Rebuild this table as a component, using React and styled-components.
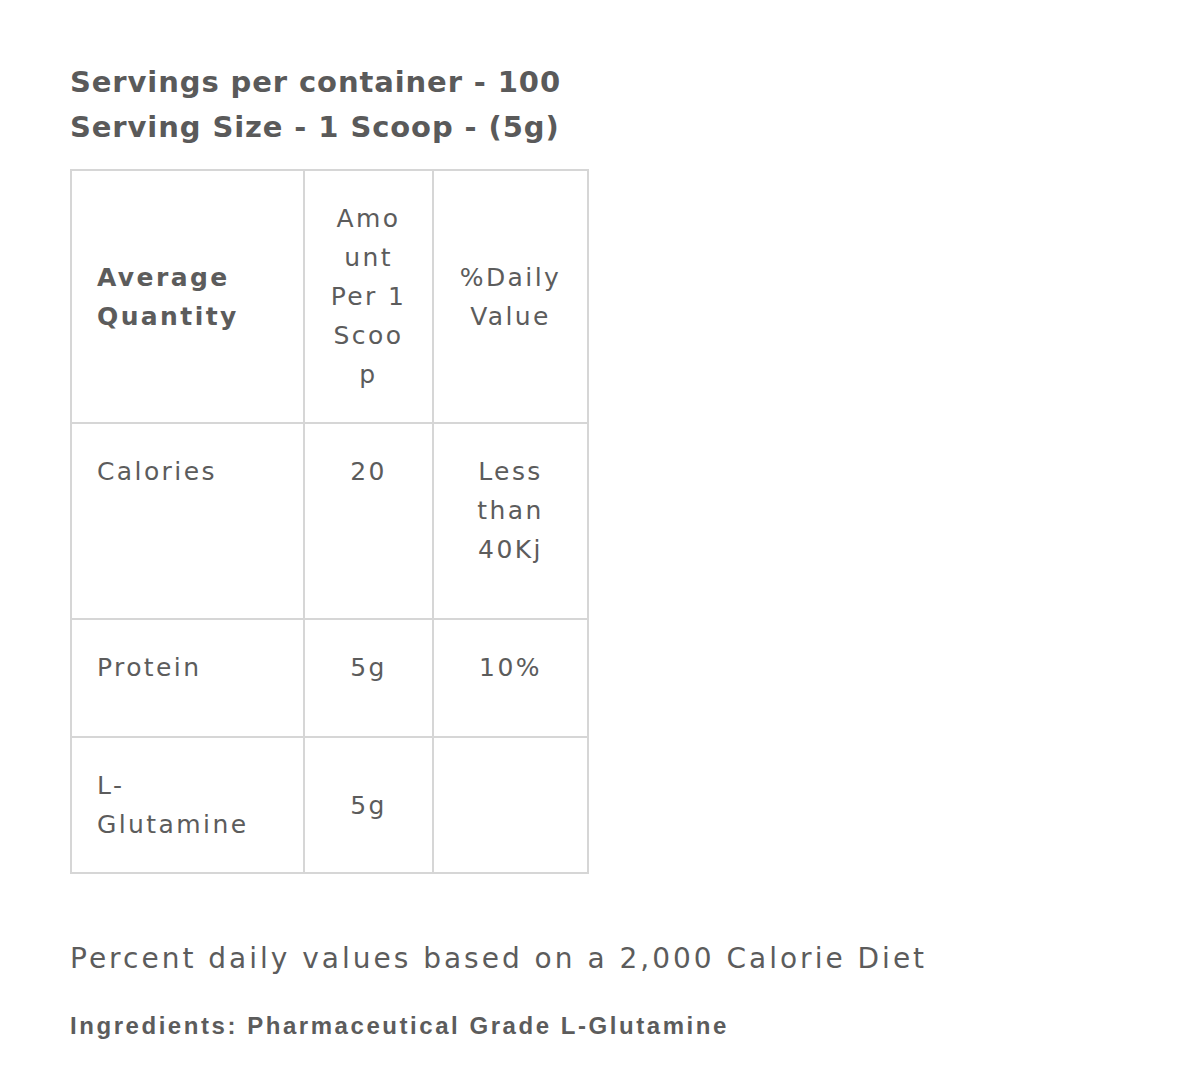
import React from "react";
import styled, { createGlobalStyle } from "styled-components";

const GlobalStyle = createGlobalStyle`
  body {
    margin: 0;
    background: #ffffff;
    font-family: "DejaVu Sans", "Open Sans", sans-serif;
    color: #5c5c5c;
  }
`;

const rows = [
  { name: "Calories", amount: "20", daily: ["Less", "than", "40Kj"], extra: true },
  { name: "Protein", amount: "5g", daily: ["10%"], extra: true },
  { name: ["L-", "Glutamine"], amount: "5g", daily: [], middle: true },
];

function Lines({ items }) {
  const list = Array.isArray(items) ? items : [items];
  return list.map((t, i) => <Line key={i}>{t}</Line>);
}

function App() {
  return (
    <Page>
      <GlobalStyle />
      <Heading>
        <div>Servings per container - 100</div>
        <div>Serving Size - 1 Scoop - (5g)</div>
      </Heading>

      <Table>
        <colgroup>
          <col style={{ width: 233 }} />
          <col style={{ width: 129 }} />
          <col style={{ width: 155 }} />
        </colgroup>
        <tbody>
          <tr>
            <Cell $middle $bold>
              <Lines items={["Average", "Quantity"]} />
            </Cell>
            <Cell $middle $center>
              <Lines items={["Amo", "unt", "Per 1", "Scoo", "p"]} />
            </Cell>
            <Cell $middle $center>
              <Lines items={["%Daily", "Value"]} />
            </Cell>
          </tr>
          {rows.map((r, i) => (
            <tr key={i}>
              <Cell $extra={r.extra} $middle={r.middle}>
                <Lines items={r.name} />
              </Cell>
              <Cell $extra={r.extra} $middle={r.middle} $center>
                <Lines items={r.amount} />
              </Cell>
              <Cell $extra={r.extra} $middle={r.middle} $center>
                <Lines items={r.daily} />
              </Cell>
            </tr>
          ))}
        </tbody>
      </Table>

      <Note>Percent daily values based on a 2,000 Calorie Diet</Note>
      <Ingredients>Ingredients: Pharmaceutical Grade L-Glutamine</Ingredients>
    </Page>
  );
}

export default App;

const Page = styled.div`
  padding: 60px 70px 40px;
  width: 1185px;
  box-sizing: border-box;
`;

const Heading = styled.div`
  font-size: 29px;
  line-height: 45px;
  font-weight: 700;
  letter-spacing: 0.9px;
  color: #5a5a5a;
  margin-bottom: 19px;
`;

const Table = styled.table`
  border-collapse: collapse;
  table-layout: fixed;
  width: 517px;
  border: 2px solid #d6d6d6;
`;

const Cell = styled.td`
  border: 2px solid #d6d6d6;
  padding: 28px 22px ${(p) => (p.$extra ? "49px" : "28px")}
    ${(p) => (p.$center ? "22px" : "25px")};
  vertical-align: ${(p) => (p.$middle ? "middle" : "top")};
  text-align: ${(p) => (p.$center ? "center" : "left")};
  font-size: 25px;
  line-height: 39px;
  letter-spacing: 2.4px;
  font-weight: ${(p) => (p.$bold ? 700 : 400)};
  color: #5c5c5c;
`;

const Line = styled.div`
  white-space: nowrap;
`;

const Note = styled.p`
  margin: 64px 0 0;
  font-size: 28px;
  line-height: 42px;
  letter-spacing: 3px;
  color: #5c5c5c;
`;

const Ingredients = styled.p`
  margin: 32px 0 0;
  font-family: "Liberation Sans", Arial, sans-serif;
  font-weight: 700;
  font-size: 24px;
  line-height: 28px;
  letter-spacing: 2.55px;
  color: #5c5c5c;
`;
